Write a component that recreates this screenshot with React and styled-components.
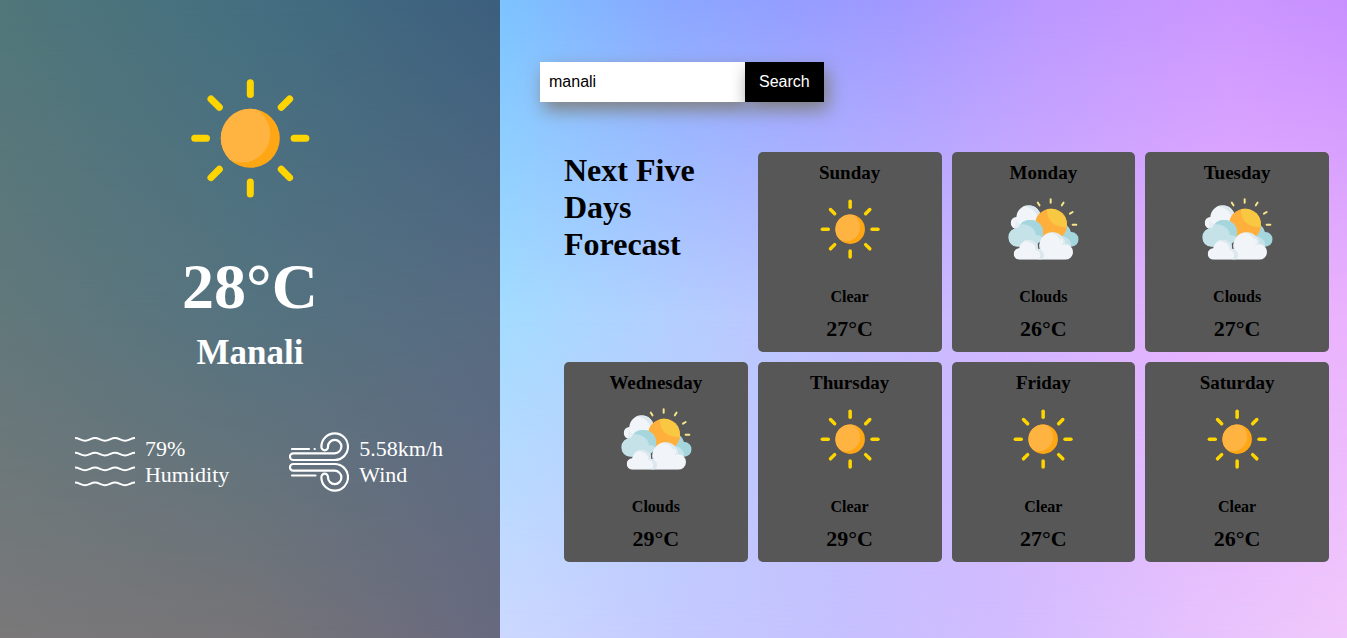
import React, { useState } from "react";
import styled, { createGlobalStyle } from "styled-components";

const GlobalStyle = createGlobalStyle`
  * { box-sizing: border-box; }
  body {
    margin: 0;
    font-family: "Liberation Serif", "Times New Roman", serif;
    color: #000;
  }
  h1, h2, h3, p { margin: 0; }
`;

/* Colour mesh: one horizontal gradient for the top, middle and bottom, blended by vertical masks. */
const mesh = (top, middle, bottom) => `
  position: relative;
  isolation: isolate;
  background: linear-gradient(90deg, ${top});
  &::before, &::after {
    content: "";
    position: absolute;
    inset: 0;
    z-index: -1;
  }
  &::before {
    background: linear-gradient(90deg, ${middle});
    mask-image: linear-gradient(transparent, #000 50%);
  }
  &::after {
    background: linear-gradient(90deg, ${bottom});
    mask-image: linear-gradient(transparent 50%, #000);
  }
`;

const Page = styled.div`
  display: grid;
  grid-template-columns: minmax(0, 500px) minmax(0, 1fr);
  min-height: 100vh;
`;

const CurrentPanel = styled.aside`
  ${mesh(
    "#50777a, #446f80 50%, #3c5f7e",
    "#62787b, #557380 50%, #576b82",
    "#7a7879, #767477 50%, #67697f"
  )}
  display: flex;
  flex-direction: column;
  align-items: center;
  padding: 78px 0 40px;
  color: #fff;
`;

const Temperature = styled.h1`
  margin-top: 52px;
  font-size: 64px;
  line-height: 74px;
`;

const City = styled.h2`
  margin-top: 9px;
  font-size: 35px;
  line-height: 40px;
`;

const Metrics = styled.div`
  display: flex;
  gap: 60px;
  margin-top: 59px;
  padding-left: 18px;
`;

const Metric = styled.div`
  display: flex;
  align-items: center;
  gap: 10px;
  font-size: 22px;
  line-height: 26px;
`;

const ForecastPanel = styled.main`
  ${mesh(
    "#7cc4ff, #8aa8ff 20%, #959dff 35%, #a398ff 48%, #bb98ff 64%, #cc97ff 86%, #c790ff",
    "#a4dcff, #b7ccff 25%, #c6beff 45%, #d6b4ff 65%, #e8b2ff 84%, #ebb3fd",
    "#ccd8ff, #c4caff 20%, #c5c0ff 40%, #d0bbff 58%, #e5c2fd 82%, #f0c8fb"
  )}
  padding: 62px 18px 40px 40px;
`;

const SearchBar = styled.form`
  display: flex;
  height: 40px;
`;

const SearchInput = styled.input`
  width: 205px;
  padding: 0 9px;
  border: 0;
  outline: 0;
  background: #fff;
  color: #000;
  font: 16px "Liberation Sans", Arial, sans-serif;
  box-shadow: 4px 8px 18px #808080;
`;

const SearchButton = styled.button`
  padding: 0 14px;
  border: 0;
  background: #000;
  color: #fff;
  font: 16px "Liberation Sans", Arial, sans-serif;
  box-shadow: 4px 8px 18px #808080;
  cursor: pointer;
`;

const ForecastGrid = styled.section`
  display: grid;
  grid-template-columns: repeat(4, minmax(0, 1fr));
  gap: 10px;
  margin-top: 50px;
  padding-left: 24px;
`;

const ForecastTitle = styled.h2`
  font-size: 32px;
  line-height: 37px;
`;

const Card = styled.article`
  display: flex;
  flex-direction: column;
  align-items: center;
  padding: 10px 10px 11px;
  border-radius: 5px;
  background: #575757;
  font-weight: bold;
`;

const DayName = styled.h3`
  font-size: 19px;
  line-height: 21px;
`;

const IconSlot = styled.div`
  display: flex;
  align-items: center;
  height: 64px;
  margin: 14px 0 27px;
`;

const Condition = styled.p`
  font-size: 16px;
  line-height: 18px;
`;

const DayTemperature = styled.p`
  margin-top: 10px;
  font-size: 22px;
  line-height: 25px;
`;

function SunIcon({ size, id }) {
  return (
    <svg width={size} height={size} viewBox="0 0 120 120" aria-hidden="true">
      <clipPath id={id}>
        <circle cx="60.3" cy="60.3" r="29.5" />
      </clipPath>
      <circle cx="60.3" cy="60.3" r="29.5" fill="#ffa615" />
      <circle cx="51.6" cy="56" r="28.6" fill="#ffb341" clipPath={`url(#${id})`} />
      <g stroke="#ffd500" strokeWidth="7" strokeLinecap="round">
        {[0, 45, 90, 135, 180, 225, 270, 315].map((a) => (
          <line key={a} x1="60.3" y1="4.7" x2="60.3" y2="16.5" transform={`rotate(${a} 60.3 60.3)`} />
        ))}
      </g>
    </svg>
  );
}

function CloudIcon({ id }) {
  return (
    <svg width="74" height="64" viewBox="48 22 222 192" aria-hidden="true">
      <clipPath id={`${id}-back`}>
        <circle cx="116" cy="84" r="37" />
        <circle cx="80" cy="100" r="18" />
        <rect x="80" y="84" width="70" height="34" />
      </clipPath>
      <clipPath id={`${id}-right`}>
        <circle cx="206" cy="136" r="38" />
        <circle cx="244" cy="149" r="22" />
      </clipPath>
      <clipPath id={`${id}-sun`}>
        <circle cx="183" cy="105" r="48" />
      </clipPath>
      <clipPath id={`${id}-left`}>
        <circle cx="121" cy="129" r="39" />
        <circle cx="83" cy="143" r="28" />
        <rect x="83" y="130" width="60" height="41" />
      </clipPath>
      <clipPath id={`${id}-front`}>
        <circle cx="187" cy="167" r="39" />
        <circle cx="116" cy="180" r="29" />
        <circle cx="88" cy="193" r="17" />
        <circle cx="226" cy="187" r="23" />
        <rect x="88" y="178" width="138" height="32" />
      </clipPath>
      <g clipPath={`url(#${id}-back)`}>
        <rect x="50" y="40" width="120" height="85" fill="#f1f5f9" />
        <path d="M92 50c22-2 46 10 52 36l12 4-2-40-38-8Z" fill="#dce8ee" />
        <path d="M78 79c-2 12 5 24 18 28l4 13H74Z" fill="#e6eef3" />
      </g>
      <g clipPath={`url(#${id}-right)`}>
        <rect x="165" y="95" width="105" height="80" fill="#a5d6de" />
        <path d="M205 139c20-2 34 8 38 22v14h-45Z" fill="#c6e2e9" />
      </g>
      <circle cx="183" cy="105" r="48" fill="#ffb03c" />
      <path d="M171 50c-4 40 18 66 65 62V50Z" fill="#f8c842" clipPath={`url(#${id}-sun)`} />
      <g clipPath={`url(#${id}-left)`}>
        <rect x="50" y="85" width="115" height="90" fill="#a5d6de" />
        <path d="M50 104h45c24 0 40 12 43 33 12-2 22 6 24 16v25H50Z" fill="#c6e2e9" />
      </g>
      <g clipPath={`url(#${id}-front)`}>
        <rect x="60" y="122" width="195" height="90" fill="#f1f5f9" />
        <path d="M103 155c19-2 34 9 34 26 14 2 18 20 7 29h10c12-6 11-22-1-28 0-18-12-33-32-33Z" fill="#dce8ee" />
        <path d="M175 129c20 0 36 10 40 36h12c-2-24-14-38-34-42Z" fill="#dfeaf0" />
        <path d="M212 149a7 9 0 0 1 4 12" fill="none" stroke="#f6f9fb" strokeWidth="4" />
      </g>
      <g stroke="#f5e58b" strokeWidth="6" strokeLinecap="round">
        <path d="M182 29v10M143.500 39l5 8M220.500 39l-5 8M248 67l-8 5M248 105h11" />
      </g>
    </svg>
  );
}

function HumidityIcon() {
  return (
    <svg width="60" height="60" viewBox="0 0 60 60" fill="none" stroke="#fff" strokeWidth="2" aria-hidden="true">
      {[6, 20.7, 35.6, 50.6].map((y) => (
        <path key={y} d={`M0 ${y}c4 0 6 2.700 10 2.700s6-2.700 10-2.700 6 2.700 10 2.700 6-2.700 10-2.700 6 2.700 10 2.700 6-2.700 10-2.700`} />
      ))}
    </svg>
  );
}

function WindIcon() {
  const tube =
    "M4.300 21.300H45.700a6.700 6.700 0 1 0-6.700-6.700v.4a3.300 3.300 0 1 1-6.600 0v-.4a13.300 13.300 0 1 1 13.300 13.400H4.300a3.350 3.350 0 0 1 0-6.700Z";
  return (
    <svg width="60" height="60" viewBox="0 0 60 60" fill="none" stroke="#fff" strokeWidth="2.200" strokeLinecap="round" aria-hidden="true">
      <path d={tube} />
      <path d={tube} transform="matrix(1 0 0 -1 0 60)" />
      <path d="M3 17h17M25.600 17h.2M3 43.500h23.500" />
    </svg>
  );
}

const days = [
  { name: "Sunday", condition: "Clear", temp: 27 },
  { name: "Monday", condition: "Clouds", temp: 26 },
  { name: "Tuesday", condition: "Clouds", temp: 27 },
  { name: "Wednesday", condition: "Clouds", temp: 29 },
  { name: "Thursday", condition: "Clear", temp: 29 },
  { name: "Friday", condition: "Clear", temp: 27 },
  { name: "Saturday", condition: "Clear", temp: 26 },
];

export default function App() {
  const [query, setQuery] = useState("manali");
  return (
    <>
      <GlobalStyle />
      <Page>
        <CurrentPanel>
          <SunIcon size={120} id="sun-current" />
          <Temperature>28°C</Temperature>
          <City>Manali</City>
          <Metrics>
            <Metric>
              <HumidityIcon />
              <div>
                <p>79%</p>
                <p>Humidity</p>
              </div>
            </Metric>
            <Metric>
              <WindIcon />
              <div>
                <p>5.58km/h</p>
                <p>Wind</p>
              </div>
            </Metric>
          </Metrics>
        </CurrentPanel>
        <ForecastPanel>
          <SearchBar onSubmit={(e) => e.preventDefault()}>
            <SearchInput
              type="text"
              aria-label="City"
              value={query}
              onChange={(e) => setQuery(e.target.value)}
            />
            <SearchButton type="submit">Search</SearchButton>
          </SearchBar>
          <ForecastGrid>
            <ForecastTitle>Next Five Days Forecast</ForecastTitle>
            {days.map((day) => (
              <Card key={day.name}>
                <DayName>{day.name}</DayName>
                <IconSlot>
                  {day.condition === "Clear" ? (
                    <SunIcon size={60} id={`sun-${day.name}`} />
                  ) : (
                    <CloudIcon id={`cloud-${day.name}`} />
                  )}
                </IconSlot>
                <Condition>{day.condition}</Condition>
                <DayTemperature>{day.temp}°C</DayTemperature>
              </Card>
            ))}
          </ForecastGrid>
        </ForecastPanel>
      </Page>
    </>
  );
}
